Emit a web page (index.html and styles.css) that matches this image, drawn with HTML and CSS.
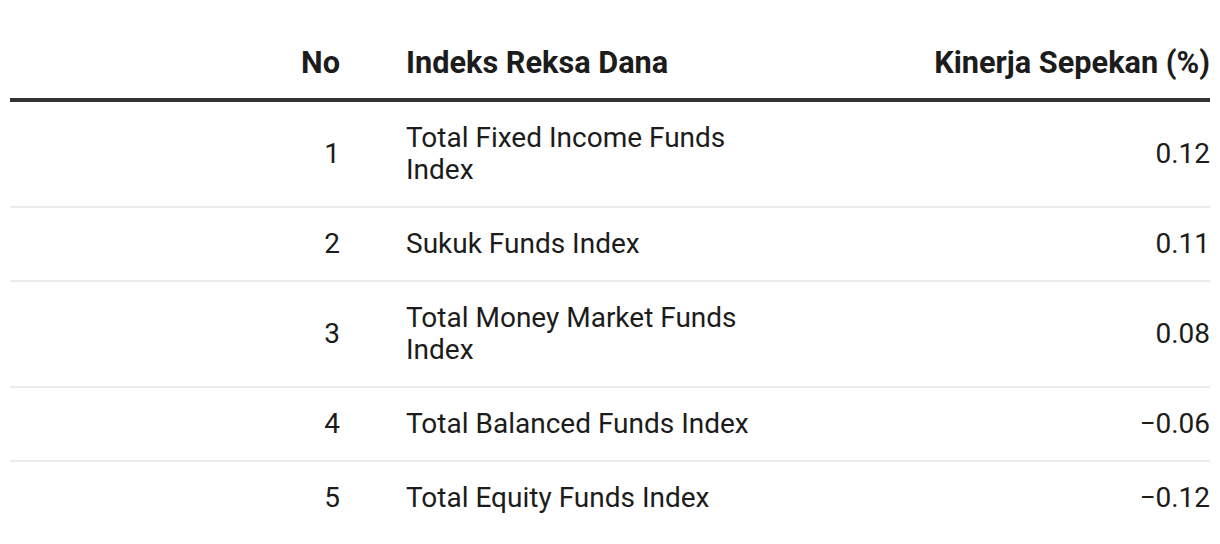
FILE: index.html
```html
<!DOCTYPE html>
<html>
<head>
<meta charset="utf-8">
<link rel="stylesheet" href="styles.css">
</head>
<body>
<table class="tbl">
  <colgroup>
    <col class="c-no">
    <col class="c-name">
    <col class="c-val">
  </colgroup>
  <thead>
    <tr>
      <th class="no">No</th>
      <th class="name">Indeks Reksa Dana</th>
      <th class="val">Kinerja Sepekan (%)</th>
    </tr>
  </thead>
  <tbody>
    <tr><td class="no">1</td><td class="name">Total Fixed Income Funds Index</td><td class="val">0.12</td></tr>
    <tr><td class="no">2</td><td class="name">Sukuk Funds Index</td><td class="val">0.11</td></tr>
    <tr><td class="no">3</td><td class="name">Total Money Market Funds Index</td><td class="val">0.08</td></tr>
    <tr><td class="no">4</td><td class="name">Total Balanced Funds Index</td><td class="val">−0.06</td></tr>
    <tr class="last"><td class="no">5</td><td class="name">Total Equity Funds Index</td><td class="val">−0.12</td></tr>
  </tbody>
</table>
</body>
</html>
```
FILE: styles.css
```css
html, body {
  margin: 0;
  padding: 0;
  background: #fff;
}
body {
  padding: 0 10px;
  font-family: Roboto, "Liberation Sans", sans-serif;
  color: #1c1c1c;
}
.tbl {
  width: 1200px;
  border-collapse: collapse;
  table-layout: fixed;
  margin-top: 34px;
}
.c-no { width: 330px; }
.c-name { width: 426px; }
.tbl th {
  font-size: 30.7px;
  font-weight: 700;
  line-height: 32px;
  padding: 13px 0 19px 0;
  border-bottom: 4px solid #333;
  text-align: left;
  vertical-align: bottom;
}
.tbl td {
  font-size: 28px;
  line-height: 32px;
  padding: 20px 0;
  border-bottom: 2px solid #ececec;
  vertical-align: middle;
}
.tbl .last td { border-bottom: none; }
.tbl .no { text-align: right; }
.tbl .name { padding-left: 66px; padding-right: 0; }
.tbl .val { text-align: right; }
```
